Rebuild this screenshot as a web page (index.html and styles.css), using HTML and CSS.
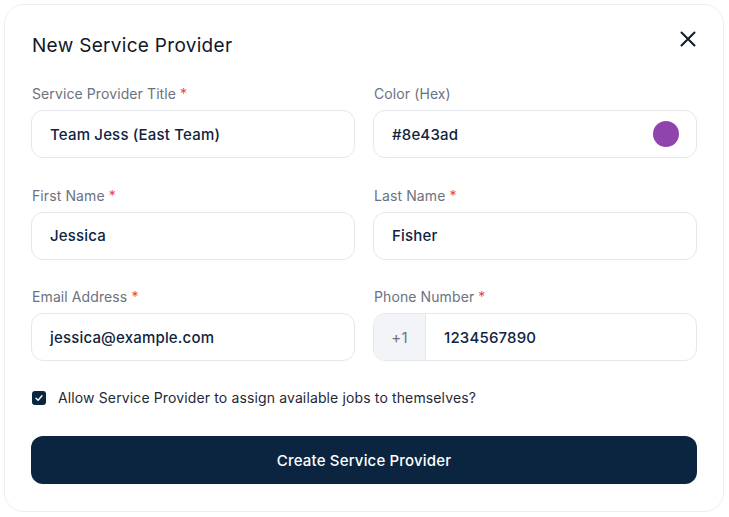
FILE: index.html
```html
<!DOCTYPE html>
<html>
<head>
<meta charset="utf-8">
<link rel="stylesheet" href="styles.css">
</head>
<body>
<div class="card">
  <h1 class="title">New Service Provider</h1>
  <button class="close" aria-label="Close">
    <svg width="18" height="18" viewBox="0 0 18 18"><path d="M2.5 2.5 L15.5 15.5 M15.5 2.5 L2.5 15.5" stroke="#111827" stroke-width="2" stroke-linecap="round"/></svg>
  </button>
  <div class="grid">
    <div class="field">
      <label class="label">Service Provider Title <span class="req">*</span></label>
      <div class="input">Team Jess (East Team)</div>
    </div>
    <div class="field">
      <label class="label">Color (Hex)</label>
      <div class="input color-input"><span>#8e43ad</span><span class="swatch"></span></div>
    </div>
    <div class="field">
      <label class="label">First Name <span class="req">*</span></label>
      <div class="input">Jessica</div>
    </div>
    <div class="field">
      <label class="label">Last Name <span class="req">*</span></label>
      <div class="input">Fisher</div>
    </div>
    <div class="field">
      <label class="label">Email Address <span class="req">*</span></label>
      <div class="input">jessica@example.com</div>
    </div>
    <div class="field">
      <label class="label">Phone Number <span class="req">*</span></label>
      <div class="input phone"><span class="prefix">+1</span><span class="phone-val">1234567890</span></div>
    </div>
  </div>
  <div class="check-row">
    <span class="checkbox">
      <svg width="10" height="10" viewBox="0 0 10 10"><path d="M2 5.2 L4.1 7.2 L8 2.8" fill="none" stroke="#fff" stroke-width="1.4" stroke-linecap="round" stroke-linejoin="round"/></svg>
    </span>
    <span class="check-text">Allow Service Provider to assign available jobs to themselves?</span>
  </div>
  <button class="submit">Create Service Provider</button>
</div>
</body>
</html>
```
FILE: styles.css
```css
* { box-sizing: border-box; }
html, body { margin: 0; padding: 0; background: #fff; }
body {
  padding: 4px 5px 5px 4px;
  font-family: Inter, "Noto Sans", sans-serif;
  color: #0f2440;
}
.card {
  position: relative;
  width: 720px;
  height: 508px;
  border: 1px solid #eceef1;
  border-radius: 20px;
  padding: 27px 26px 26px 26px;
  background: #fff;
}
.title {
  margin: 0 0 24px 1px;
  font-size: 19px;
  line-height: 28px;
  font-weight: 400;
  letter-spacing: 0.3px;
  color: #111827;
}
.close {
  position: absolute;
  top: 24px;
  right: 25px;
  width: 20px;
  height: 20px;
  padding: 0;
  border: 0;
  background: none;
  display: flex;
  align-items: center;
  justify-content: center;
}
.grid {
  display: grid;
  grid-template-columns: 1fr 1fr;
  column-gap: 18px;
  row-gap: 27.5px;
}
.field { display: flex; flex-direction: column; gap: 6px; }
.label {
  font-size: 14px;
  line-height: 20px;
  color: #6b7280;
  padding-left: 1px;
  letter-spacing: 0.1px;
}
.req { color: #ef4444; }
.input {
  height: 48px;
  border: 1px solid #e5e7eb;
  border-radius: 12px;
  display: flex;
  align-items: center;
  padding: 0 18px;
  font-size: 15px;
  font-weight: 500;
  letter-spacing: 0.18px;
  color: #0f2440;
}
.color-input { justify-content: space-between; padding-right: 17px; }
.swatch {
  width: 26px; height: 26px; border-radius: 50%;
  background: #8e43ad;
}
.phone { padding: 0; overflow: hidden; }
.prefix {
  width: 52px;
  height: 100%;
  background: #f3f4f7;
  border-right: 1px solid #e5e7eb;
  display: flex;
  align-items: center;
  justify-content: center;
  color: #6b7280;
  font-weight: 400;
}
.phone-val { padding-left: 18px; }
.check-row {
  display: flex;
  align-items: center;
  gap: 12px;
  margin-top: 27px;
  height: 20px;
  padding-left: 1px;
}
.checkbox {
  width: 14px; height: 14px;
  border-radius: 3px;
  background: #0b2541;
  display: flex; align-items: center; justify-content: center;
}
.check-text { font-size: 14px; line-height: 20px; color: #1f2937; letter-spacing: 0.13px; }
.submit {
  display: block;
  width: 100%;
  height: 48px;
  margin-top: 28px;
  border: 0;
  border-radius: 12px;
  background: #0b2541;
  color: #fff;
  font-family: Inter, "Noto Sans", sans-serif;
  font-size: 15px;
  font-weight: 500;
  letter-spacing: 0.17px;
}
```
